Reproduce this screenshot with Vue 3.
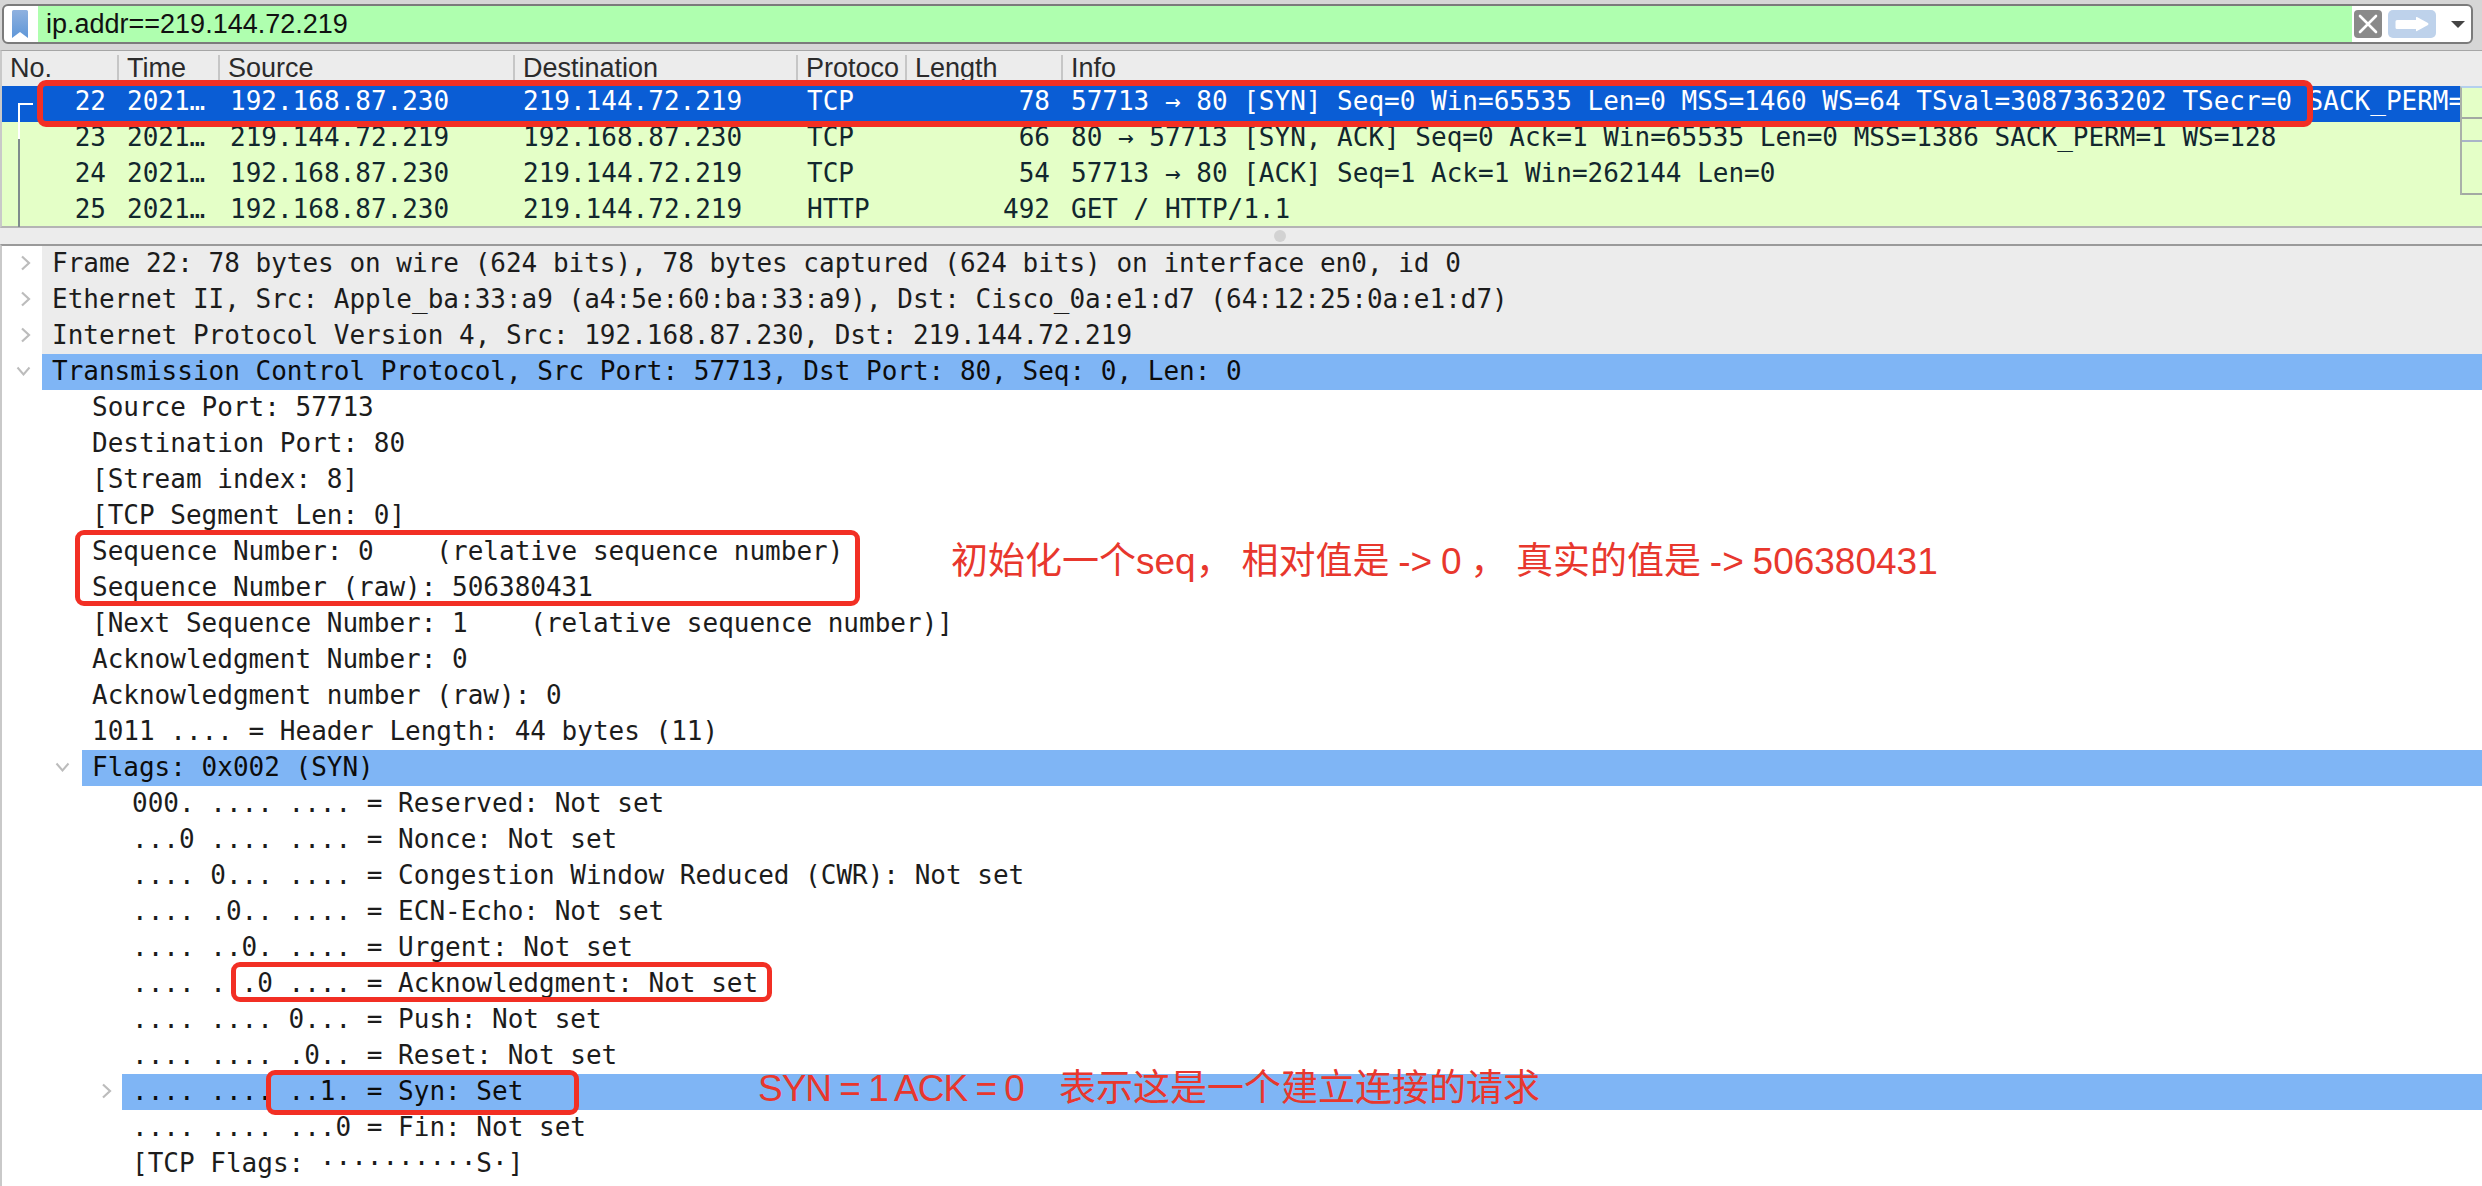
<script setup>
const columns = ['No.', 'Time', 'Source', 'Destination', 'Protocol', 'Length', 'Info']

const packets = [
  { no: 22, src: '192.168.87.230', dst: '219.144.72.219', proto: 'TCP', len: 78, info: '57713 → 80 [SYN] Seq=0 Win=65535 Len=0 MSS=1460 WS=64 TSval=3087363202 TSecr=0 SACK_PERM=1', selected: true },
  { no: 23, src: '219.144.72.219', dst: '192.168.87.230', proto: 'TCP', len: 66, info: '80 → 57713 [SYN, ACK] Seq=0 Ack=1 Win=65535 Len=0 MSS=1386 SACK_PERM=1 WS=128' },
  { no: 24, src: '192.168.87.230', dst: '219.144.72.219', proto: 'TCP', len: 54, info: '57713 → 80 [ACK] Seq=1 Ack=1 Win=262144 Len=0' },
  { no: 25, src: '192.168.87.230', dst: '219.144.72.219', proto: 'HTTP', len: 492, info: 'GET / HTTP/1.1' }
]

const details = [
  { t: 'Frame 22: 78 bytes on wire (624 bits), 78 bytes captured (624 bits) on interface en0, id 0', l: 0, exp: 'right', tone: 'gray' },
  { t: 'Ethernet II, Src: Apple_ba:33:a9 (a4:5e:60:ba:33:a9), Dst: Cisco_0a:e1:d7 (64:12:25:0a:e1:d7)', l: 0, exp: 'right', tone: 'gray' },
  { t: 'Internet Protocol Version 4, Src: 192.168.87.230, Dst: 219.144.72.219', l: 0, exp: 'right', tone: 'gray' },
  { t: 'Transmission Control Protocol, Src Port: 57713, Dst Port: 80, Seq: 0, Len: 0', l: 0, exp: 'down', tone: 'blue' },
  { t: 'Source Port: 57713', l: 1 },
  { t: 'Destination Port: 80', l: 1 },
  { t: '[Stream index: 8]', l: 1 },
  { t: '[TCP Segment Len: 0]', l: 1 },
  { t: 'Sequence Number: 0    (relative sequence number)', l: 1 },
  { t: 'Sequence Number (raw): 506380431', l: 1 },
  { t: '[Next Sequence Number: 1    (relative sequence number)]', l: 1 },
  { t: 'Acknowledgment Number: 0', l: 1 },
  { t: 'Acknowledgment number (raw): 0', l: 1 },
  { t: '1011 .... = Header Length: 44 bytes (11)', l: 1 },
  { t: 'Flags: 0x002 (SYN)', l: 1, exp: 'down', tone: 'blue' },
  { t: '000. .... .... = Reserved: Not set', l: 2 },
  { t: '...0 .... .... = Nonce: Not set', l: 2 },
  { t: '.... 0... .... = Congestion Window Reduced (CWR): Not set', l: 2 },
  { t: '.... .0.. .... = ECN-Echo: Not set', l: 2 },
  { t: '.... ..0. .... = Urgent: Not set', l: 2 },
  { t: '.... ...0 .... = Acknowledgment: Not set', l: 2 },
  { t: '.... .... 0... = Push: Not set', l: 2 },
  { t: '.... .... .0.. = Reset: Not set', l: 2 },
  { t: '.... .... ..1. = Syn: Set', l: 2, exp: 'right', tone: 'blue' },
  { t: '.... .... ...0 = Fin: Not set', l: 2 },
  { t: '[TCP Flags: ··········S·]', l: 2 }
]

const mapSegments = ['m1', 'm2', 'm3']
</script>

<template>
  <div class="app">
    <div class="toolbar">
      <div class="filter">
        <div class="bookmark">
          <svg width="16" height="28" viewBox="0 0 16 28">
            <defs>
              <linearGradient id="bm" x1="0" y1="0" x2="0" y2="1">
                <stop offset="0" stop-color="#8fb1df" />
                <stop offset="1" stop-color="#5f97d8" />
              </linearGradient>
            </defs>
            <path d="M0 1.5Q0 0 1.5 0h13Q16 0 16 1.5V28l-8-6-8 6z" fill="url(#bm)" />
          </svg>
        </div>
        <div class="filter-input">ip.addr==219.144.72.219</div>
        <div class="filter-actions">
          <div class="btn-clear">
            <svg width="28" height="28" viewBox="0 0 28 28">
              <path d="M6 6l16 16M22 6L6 22" stroke="#fff" stroke-width="2.6" stroke-linecap="round" />
            </svg>
          </div>
          <div class="btn-apply">
            <svg width="48" height="28" viewBox="0 0 48 28">
              <path d="M9 10h19V7.5q0-1 1-.4l11 6q1 .9 0 1.8l-11 6q-1 .6-1-.4V19H9q-1.5 0-1.5-1.5v-6Q7.500 10 9 10z" fill="#fff" />
            </svg>
          </div>
          <svg class="caret" width="14" height="7" viewBox="0 0 14 7"><path d="M0 0h14L7 7z" fill="#444" /></svg>
        </div>
      </div>
    </div>

    <div class="packets">
      <div class="cols head">
        <div v-for="c in columns" :key="c" class="head-cell"><span>{{ c }}</span></div>
      </div>
      <div class="list-body">
        <div class="rows">
          <div v-for="p in packets" :key="p.no" class="cols row" :class="{ selected: p.selected }">
            <span class="c-no">{{ p.no }}</span>
            <span class="c-time">2021…</span>
            <span class="c-src">{{ p.src }}</span>
            <span class="c-dst">{{ p.dst }}</span>
            <span class="c-proto">{{ p.proto }}</span>
            <span class="c-len">{{ p.len }}</span>
            <span class="c-info">{{ p.info }}</span>
          </div>
        </div>
        <div class="minimap">
          <div v-for="m in mapSegments" :key="m" :class="m"></div>
        </div>
        <svg class="bracket" width="16" height="124" viewBox="0 0 16 124">
          <path d="M1 124V18" stroke="#7f8c8c" stroke-width="2" fill="none" />
          <path d="M15 1H1v35" stroke="#fff" stroke-width="2" fill="none" />
        </svg>
      </div>
    </div>

    <div class="splitter"><i></i></div>

    <div class="details">
      <div v-for="(d, i) in details" :key="i" class="d-row">
        <span class="exp" :class="'lv' + d.l">
          <svg v-if="d.exp === 'right'" width="11" height="16" viewBox="0 0 11 16">
            <path d="M2 1.500l7 6.500-7 6.500" fill="none" stroke="#bcbcbc" stroke-width="2.200" />
          </svg>
          <svg v-if="d.exp === 'down'" width="15" height="10" viewBox="0 0 15 10">
            <path d="M1.500 1.500l6 7 6-7" fill="none" stroke="#bcbcbc" stroke-width="2" />
          </svg>
        </span>
        <span class="d-text" :class="d.tone">{{ d.t }}</span>
      </div>
    </div>

    <div class="mark mark-row"></div>
    <div class="mark mark-seq"></div>
    <div class="mark mark-ack"></div>
    <div class="mark mark-syn"></div>

    <div class="note note-seq">初始化一个seq， 相对值是 -&gt; 0 ， 真实的值是 -&gt; 506380431</div>
    <div class="note note-syn"><span class="latin">SYN = 1 ACK = 0</span><span class="cjk">表示这是一个建立连接的请求</span></div>
  </div>
</template>

<style scoped>
.app {
  position: relative;
  width: 2482px;
  height: 1186px;
  overflow: hidden;
  display: flex;
  flex-direction: column;
  background: #fff;
  font-family: "DejaVu Sans Mono", "Liberation Mono", monospace;
  font-size: 26px;
}
.toolbar {
  height: 50px;
  flex: none;
  box-sizing: border-box;
  padding: 4px 9px 0 2px;
  background: #d6d6d6;
}
.filter {
  height: 40px;
  box-sizing: border-box;
  border: 2px solid #7b7b7b;
  border-radius: 6px;
  background: #fff;
  display: flex;
  overflow: hidden;
}
.bookmark {
  width: 34px;
  flex: none;
  box-sizing: border-box;
  padding: 4px 0 0 8px;
}
.bookmark svg { display: block; }
.filter-input {
  flex: 1;
  background: #afffaf;
  font-family: "Liberation Sans", Arial, sans-serif;
  font-size: 27px;
  line-height: 36px;
  padding-left: 8px;
  color: #111;
}
.filter-actions {
  flex: none;
  width: 119px;
  display: flex;
  align-items: flex-start;
  box-sizing: border-box;
  padding: 4px 0 0 2px;
}
.btn-clear {
  width: 28px;
  height: 28px;
  border-radius: 4px;
  background: #8a8a8a;
  margin-right: 6px;
}
.btn-apply {
  width: 48px;
  height: 28px;
  border-radius: 5px;
  background: #bed2eb;
  margin-right: 15px;
}
.btn-clear svg, .btn-apply svg { display: block; }
.caret { margin-top: 11px; }

.packets {
  flex: none;
  height: 178px;
  box-sizing: border-box;
  border-top: 1px solid #a6a6a6;
  border-bottom: 2px solid #b4b4b4;
  border-left: 2px solid #c9c9c9;
  display: flex;
  flex-direction: column;
}
.cols {
  display: grid;
  grid-template-columns: 117px 101px 295px 283px 109px 156px minmax(0, 1fr);
}
.head {
  height: 35px;
  flex: none;
  background: #ececec;
}
.head-cell {
  position: relative;
  box-sizing: border-box;
  padding: 0 7px 0 8px;
  font-family: "Liberation Sans", Arial, sans-serif;
  font-size: 27px;
  line-height: 34px;
  color: #2b2b2b;
}
.head-cell::after {
  content: "";
  position: absolute;
  right: 0;
  top: 4px;
  bottom: 0;
  width: 2px;
  background: #c6c6c6;
}
.head-cell:last-child::after { display: none; }
.head-cell span {
  display: block;
  overflow: hidden;
  white-space: nowrap;
}
.list-body {
  position: relative;
  flex: 1;
  display: flex;
  min-height: 0;
  background: #e4ffc7;
}
.rows { flex: 1; min-width: 0; }
.row {
  height: 36px;
  line-height: 31px;
  color: #12272e;
  white-space: pre;
}
.row span { overflow: hidden; }
.row.selected {
  background: #0a5dd5;
  color: #fff;
}
.c-no { text-align: right; padding-right: 13px; }
.c-time { padding-left: 8px; }
.c-src { padding-left: 10px; }
.c-dst { padding-left: 8px; }
.c-proto { padding-left: 9px; }
.c-len { text-align: right; padding-right: 13px; }
.c-info { padding-left: 8px; }
.minimap {
  flex: none;
  width: 22px;
  height: 109px;
  box-sizing: border-box;
  border-left: 2px solid #a9b1a9;
  border-top: 2px solid #b4d0ee;
}
.minimap div { box-sizing: border-box; }
.m1 { height: 29px; }
.m2 { height: 23px; border-top: 2px solid #a3a9a3; }
.m3 { height: 55px; border-top: 2px solid #a9b4c8; border-bottom: 2px solid #a3a9a3; }
.bracket {
  position: absolute;
  left: 16px;
  top: 17px;
}
.splitter {
  flex: none;
  height: 16px;
  background: #ececec;
  display: flex;
  justify-content: center;
  align-items: center;
}
.splitter i {
  display: block;
  width: 12px;
  height: 12px;
  border-radius: 50%;
  background: #d2d2d2;
  margin-bottom: 1px;
  margin-left: 78px;
}
.details {
  flex: 1;
  min-height: 0;
  border-top: 2px solid #9a9a9a;
  border-left: 2px solid #c9c9c9;
  background: #fff;
  color: #1c1c1c;
}
.d-row {
  display: flex;
  height: 36px;
  line-height: 34px;
  white-space: pre;
}
.exp {
  flex: none;
  box-sizing: border-box;
  display: flex;
  align-items: center;
  justify-content: flex-end;
}
.exp svg { display: block; margin-top: -2px; }
.lv0 { width: 40px; padding-right: 11px; }
.lv1 { width: 80px; padding-right: 12px; }
.lv2 { width: 120px; padding-right: 10px; }
.d-text {
  flex: 1;
  min-width: 0;
  padding-left: 10px;
}
.d-text.gray { background: #ececec; }
.d-text.blue { background: #7fb5f5; color: #0c0c0c; }

.mark {
  position: absolute;
  box-sizing: border-box;
  border: 5px solid #f22f24;
  border-radius: 9px;
}
.mark-row { left: 37px; top: 80px; width: 2276px; height: 47px; border-width: 6px; }
.mark-seq { left: 75px; top: 530px; width: 785px; height: 76px; }
.mark-ack { left: 231px; top: 962px; width: 541px; height: 40px; }
.mark-syn { left: 266px; top: 1070px; width: 313px; height: 45px; }

.note {
  position: absolute;
  font-family: "Liberation Sans", "Noto Sans CJK SC", sans-serif;
  font-size: 37px;
  line-height: 44px;
  color: #e8372d;
  white-space: pre;
}
.note-seq { left: 951px; top: 540px; word-spacing: -1.500px; }
.note-syn { left: 758px; top: 1067px; display: flex; }
.latin { letter-spacing: -1px; word-spacing: -1px; }
.cjk { margin-left: 35px; }
</style>

<style>
html, body { margin: 0; background: #fff; }
</style>
